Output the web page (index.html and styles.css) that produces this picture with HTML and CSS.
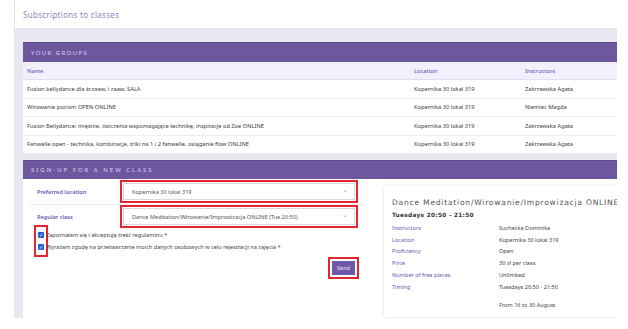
FILE: index.html
```html
<!DOCTYPE html>
<html>
<head>
    <title>Subscriptions to classes</title>
    <link rel="stylesheet" href="styles.css">
</head>
<body>
    <div class="page">
        <div class="topbar">Subscriptions to classes</div>

        <div class="main">
            <div class="panel">
                <div class="panel-head">Your groups</div>
                <div class="grid-row head">
                    <span>Name</span><span>Location</span><span>Instructors</span>
                </div>
                <div class="grid-row">
                    <span>Fusion bellydance dla śr.zaaw. i zaaw. SALA</span><span>Kopernika 30 lokal 319</span><span>Zakrzewska Agata</span>
                </div>
                <div class="grid-row">
                    <span>Wirowanie poziom OPEN ONLINE</span><span>Kopernika 30 lokal 319</span><span>Niemiec Magda</span>
                </div>
                <div class="grid-row">
                    <span>Fusion Bellydance: mięśnie, ćwiczenia wspomagające technikę, inspiracje od Zoe ONLINE</span><span>Kopernika 30 lokal 319</span><span>Zakrzewska Agata</span>
                </div>
                <div class="grid-row">
                    <span>Fanwelle open - technika, kombinacje, triki na 1 i 2 fanwelle, osiąganie flow ONLINE</span><span>Kopernika 30 lokal 319</span><span>Zakrzewska Agata</span>
                </div>
            </div>

            <div class="panel signup">
                <div class="panel-head wide">Sign-up for a new class</div>
                <div class="signup-body">
                    <div class="form">
                        <div class="form-row">
                            <label>Preferred location</label>
                            <div class="select marked">Kopernika 30 lokal 319<span class="caret">&#8964;</span></div>
                        </div>
                        <div class="form-row">
                            <label>Regular class</label>
                            <div class="select marked">Dance Meditation/Wirowanie/Improwizacja ONLINE (Tue 20:50)<span class="caret">&#8964;</span></div>
                        </div>
                        <div class="checks">
                            <div class="boxes marked">
                                <span class="box">&#10003;</span>
                                <span class="box">&#10003;</span>
                            </div>
                            <div class="check-texts">
                                <span>Zapoznałam się i akceptuję treść regulaminu *</span>
                                <span>Wyrażam zgodę na przetwarzanie moich danych osobowych w celu rejestracji na zajęcia *</span>
                            </div>
                        </div>
                        <div class="actions">
                            <button class="marked">Send</button>
                        </div>
                    </div>

                    <div class="card">
                        <div class="card-title">Dance Meditation/Wirowanie/Improwizacja ONLINE</div>
                        <div class="card-sub">Tuesdays 20:50 - 21:50</div>
                        <div class="info"><span>Instructors</span><span>Suchecka Dominika</span></div>
                        <div class="info"><span>Location</span><span>Kopernika 30 lokal 319</span></div>
                        <div class="info"><span>Proficiency</span><span>Open</span></div>
                        <div class="info"><span>Price</span><span>30 zł per class</span></div>
                        <div class="info"><span>Number of free places</span><span>Unlimited</span></div>
                        <div class="info"><span>Timing</span><span>Tuesdays 20:50 - 21:50</span></div>
                        <div class="info dates"><span></span><span>From 16 to 30 August</span></div>
                    </div>
                </div>
            </div>
        </div>
    </div>
</body>
</html>
```

FILE: styles.css
```css
body {
    margin: 0;
    background: #fff;
    font-family: "Noto Sans", Arial, sans-serif;
    color: #444;
}
.page {
    margin-left: 14px;
    width: 602px;
    overflow: hidden;
    border-left: 1px solid #e3e3ea;
}
.topbar {
    height: 29px;
    line-height: 29px;
    padding-left: 8px;
    font-size: 8px;
    letter-spacing: 0.3px;
    color: #9285bb;
    border-bottom: 1px solid #e6e5ee;
    box-sizing: border-box;
}
.main {
    background: #e9e8f1;
    padding: 13px 0 0 8px;
    height: 289px;
    box-sizing: border-box;
}
.panel {
    background: #fff;
}
.panel-head {
    background: #6d58a0;
    color: #d9d2ee;
    height: 20px;
    line-height: 20px;
    padding-left: 8px;
    font-size: 6px;
    letter-spacing: 1.4px;
    text-transform: uppercase;
    border-top: 1px solid #5d4a8c;
    box-sizing: border-box;
}
.panel-head.wide {
    letter-spacing: 2px;
    height: 19px;
    line-height: 19px;
}
.grid-row {
    display: grid;
    grid-template-columns: 387px 111px 1fr;
    height: 18.5px;
    align-items: center;
    padding-left: 4px;
    font-size: 5.7px;
    color: #3c3c3c;
    border-bottom: 1px solid #eeedf3;
    box-sizing: border-box;
}
.grid-row.head {
    height: 18px;
    background: #f3f0fd;
    color: #7058b8;
    font-weight: 500;
    border-bottom: 1px solid #e2def0;
}
.signup {
    margin-top: 6px;
    height: 159px;
}
.signup-body {
    display: flex;
    align-items: flex-start;
}
.form {
    width: 335px;
    flex: none;
    margin-left: 7px;
}
.form-row {
    display: flex;
    align-items: center;
    height: 25px;
    border-bottom: 1px solid #ebeaf0;
}
.form-row + .form-row {
    border-bottom: none;
    height: 23px;
}
.form-row label {
    width: 86px;
    padding-left: 7px;
    font-size: 5.6px;
    font-weight: 600;
    color: #6c55b0;
}
.select {
    width: 232px;
    height: 17px;
    line-height: 17px;
    padding-left: 8px;
    border: 1px solid #d9d9e0;
    box-sizing: border-box;
    font-size: 5.6px;
    color: #555;
    position: relative;
}
.caret {
    position: absolute;
    right: 6px;
    top: -3px;
    font-size: 7px;
    color: #aaa;
}
.marked {
    outline: 2px solid #e3262f;
    outline-offset: 1px;
}
.checks {
    display: flex;
    margin-left: 7px;
}
.boxes {
    display: flex;
    flex-direction: column;
    gap: 6px;
    padding: 4px 1px;
}
.box {
    width: 6px;
    height: 6px;
    background: #1f5fd4;
    color: #fff;
    font-size: 5px;
    line-height: 6px;
    text-align: center;
    border-radius: 1px;
}
.check-texts {
    display: flex;
    flex-direction: column;
    gap: 4px;
    padding-top: 3px;
    padding-left: 1px;
    font-size: 5.6px;
    color: #444;
}
.actions {
    display: flex;
    justify-content: flex-end;
    padding-right: 10px;
    margin-top: 7px;
}
button {
    background: #7058a8;
    color: #e8e2f6;
    border: none;
    width: 23px;
    height: 14px;
    font-family: "Noto Sans", Arial, sans-serif;
    font-size: 5.6px;
    padding: 0;
    cursor: pointer;
}
button.marked {
    outline-offset: 2px;
}
.card {
    margin-left: 19px;
    margin-top: 7px;
    flex: 1;
    height: 131px;
    background: #fff;
    box-shadow: 0 0 3px rgba(0, 0, 0, 0.15);
    padding: 12px 0 0 8px;
    box-sizing: border-box;
    white-space: nowrap;
    overflow: hidden;
}
.card-title {
    font-family: "DejaVu Sans", sans-serif;
    font-size: 7.6px;
    letter-spacing: 0.75px;
    color: #555;
    height: 11px;
}
.card-sub {
    font-family: "DejaVu Sans", sans-serif;
    font-size: 5.8px;
    font-weight: bold;
    letter-spacing: 0.3px;
    color: #333;
    margin-top: 3px;
    height: 10px;
}
.info {
    display: flex;
    height: 11.8px;
    align-items: center;
    font-size: 5.6px;
}
.info span:first-child {
    width: 107px;
    color: #6c55b0;
}
.info span:last-child {
    color: #444;
}
.info.dates {
    margin-top: 6px;
}
```
